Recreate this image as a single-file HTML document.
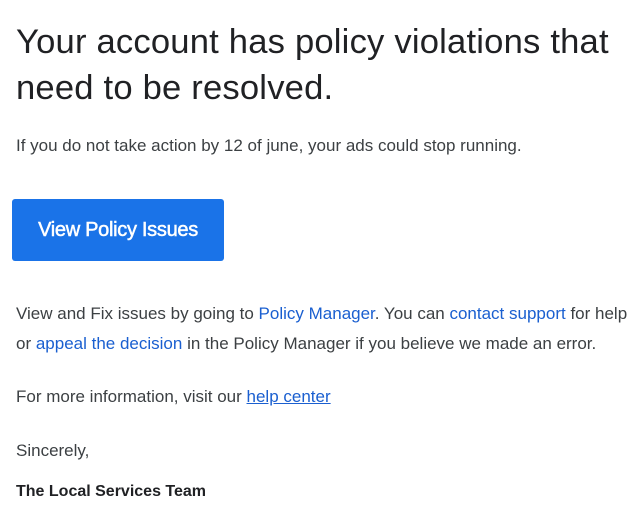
<!DOCTYPE html>
<html><head><meta charset="utf-8"><style>
body{margin:0;background:#fff;font-family:"Liberation Sans",Arial,sans-serif;color:#3c4043;width:640px;height:518px;overflow:hidden;position:relative}
.a{position:absolute;left:16px;white-space:nowrap}
h1{position:absolute;left:16px;top:19px;margin:0;font-weight:normal;font-size:34.6px;line-height:46px;color:#202124;letter-spacing:0.2px}
.p{font-size:17px;line-height:30px}
a{color:#1a5fd0;text-decoration:none}
.btn{position:absolute;left:12px;top:199px;width:212px;height:62px;background:#1a73e8;border-radius:3px;color:#fff;font-size:20px;line-height:62px;text-align:center;-webkit-text-stroke:0.5px #fff;letter-spacing:-0.3px}
</style></head><body>
<h1>Your account has policy violations that<br>need to be resolved.</h1>
<div class="a p" style="top:131px">If you do not take action by 12 of june, your ads could stop running.</div>
<div class="btn">View Policy Issues</div>
<div class="a p" style="top:299px">View and Fix issues by going to <a>Policy Manager</a>. You can <a>contact support</a> for help<br>or <a>appeal the decision</a> in the Policy Manager if you believe we made an error.</div>
<div class="a p" style="top:382px">For more information, visit our <a style="text-decoration:underline">help center</a></div>
<div class="a p" style="top:436px">Sincerely,</div>
<div class="a p" style="top:477px;font-size:16px;font-weight:bold;color:#202124">The Local Services Team</div>
</body></html>
